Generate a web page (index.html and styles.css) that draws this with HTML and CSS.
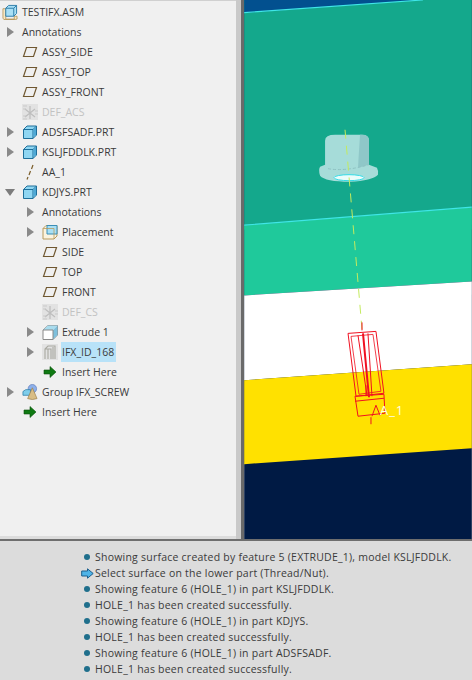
FILE: index.html
```html
<!DOCTYPE html>
<html lang="en">
<head>
    <meta charset="UTF-8">
    <title>TESTIFX.ASM</title>
    <link rel="stylesheet" href="styles.css">
</head>
<body>
    <!-- Shared tree icons -->
    <svg class="defs" width="0" height="0">
        <symbol id="i-part" viewBox="0 0 16 16">
            <path d="M1.5 5.5 L5 2 H14.5 V11 L11 14.5 H1.5 Z" fill="#8fd6f2" stroke="#1f6f9a"/>
            <path d="M1.5 5.5 H11 V14.5 M11 5.5 L14.5 2" fill="none" stroke="#1f6f9a"/>
            <path d="M11.5 5.5 L14 3 V10.5 L11.5 13 Z" fill="#4fa9d6"/>
        </symbol>
        <symbol id="i-asm" viewBox="0 0 17 17">
            <path d="M1 5 H4 V16 H13 V13 H16 V16 L14 16.5 H2 L1 15 Z" fill="#f6e7c4" stroke="#b08d4c" stroke-width=".8"/>
            <path d="M4 4.5 L7 1.5 H15.5 V10 L12.5 13 H4 Z" fill="#a9e0f6" stroke="#2a7ba8"/>
            <path d="M4 4.5 H12.5 V13 M12.5 4.5 L15.5 1.5" fill="none" stroke="#2a7ba8"/>
        </symbol>
        <symbol id="i-plane" viewBox="0 0 16 16">
            <path d="M4.5 3.5 H14.5 L11.5 12.5 H1.5 Z" fill="none" stroke="#6f5730" stroke-width="1.2"/>
        </symbol>
        <symbol id="i-csys" viewBox="0 0 16 16">
            <rect width="16" height="16" fill="#e2e2e2"/>
            <path d="M8 2 V15 M3 13 L13 5 M3 5 L13 13" stroke="#bdbdbd" stroke-width="1.2"/>
            <path d="M1 2 H5 M1 5 H4 M1 12 H4 M1 15 H5 M13 7 H16 M13 10 H16" stroke="#c9c9c9"/>
        </symbol>
        <symbol id="i-axis" viewBox="0 0 16 16">
            <path d="M11 1 L9.5 5 M8.5 7 L7 11 M6 13 L5 15.5" stroke="#7a5c28" stroke-width="1.2"/>
        </symbol>
        <symbol id="i-insert" viewBox="0 0 16 16">
            <path d="M2 6 H8 V2.5 L14 8 L8 13.5 V10 H2 Z" fill="#0f7a12" stroke="#0a4f0c" stroke-width=".6"/>
        </symbol>
        <symbol id="i-extrude" viewBox="0 0 16 16">
            <path d="M1 6 L6 1.5 H15.5 V11 L11 15.5 H1 Z" fill="#fff" stroke="#8a8a8a"/>
            <path d="M1 6 L6 1.5 H15.5 L11 6 Z" fill="#a9dcee"/>
            <path d="M11 6 L15.5 1.5 V11 L11 15.5 Z" fill="#7fc0dc"/>
            <path d="M1 6 H11 V15.5" fill="none" stroke="#8a8a8a"/>
        </symbol>
        <symbol id="i-hole" viewBox="0 0 16 16">
            <rect width="16" height="16" fill="#e2e2e2"/>
            <path d="M3 15 V5 L6 2 H13 V15 M6 15 V5 H9 V15 M11 3 V15 M6 5 L3 5" fill="none" stroke="#a8a8a0" stroke-width="1.1"/>
        </symbol>
        <symbol id="i-group" viewBox="0 0 17 17">
            <circle cx="11" cy="5" r="4.5" fill="#8db0ea" stroke="#5a78b8" stroke-width=".7"/>
            <path d="M1 8 L4 6 H9 V12 H1 Z" fill="#7fcdea" stroke="#2a7ba8" stroke-width=".8"/>
            <path d="M11 4 L16 15.5 Q11 17.5 6 15.5 Z" fill="#d9bd84" stroke="#9a7c44" stroke-width=".7"/>
        </symbol>
        <symbol id="i-place" viewBox="0 0 16 16">
            <path d="M1 4.5 L4 1.5 H15 V12 L12 15 H1 Z" fill="#fbf3df" stroke="#b99a5c"/>
            <path d="M5 1.5 H15 V10 H5 Z" fill="#a9dff4" stroke="#3b8db5"/>
            <path d="M1 4.5 H12 V15" fill="none" stroke="#b99a5c" stroke-width=".8"/>
        </symbol>
    </svg>

    <div class="workspace">
        <div class="tree">
            <div class="row"><svg class="icon"><use href="#i-asm"/></svg><span>TESTIFX.ASM</span></div>
            <div class="row lvl1"><i class="arrow"></i><span>Annotations</span></div>
            <div class="row lvl1"><i class="arrow none"></i><svg class="icon"><use href="#i-plane"/></svg><span>ASSY_SIDE</span></div>
            <div class="row lvl1"><i class="arrow none"></i><svg class="icon"><use href="#i-plane"/></svg><span>ASSY_TOP</span></div>
            <div class="row lvl1"><i class="arrow none"></i><svg class="icon"><use href="#i-plane"/></svg><span>ASSY_FRONT</span></div>
            <div class="row lvl1 off"><i class="arrow none"></i><svg class="icon"><use href="#i-csys"/></svg><span>DEF_ACS</span></div>
            <div class="row lvl1"><i class="arrow"></i><svg class="icon"><use href="#i-part"/></svg><span>ADSFSADF.PRT</span></div>
            <div class="row lvl1"><i class="arrow"></i><svg class="icon"><use href="#i-part"/></svg><span>KSLJFDDLK.PRT</span></div>
            <div class="row lvl1"><i class="arrow none"></i><svg class="icon"><use href="#i-axis"/></svg><span>AA_1</span></div>
            <div class="row lvl1"><i class="arrow open"></i><svg class="icon"><use href="#i-part"/></svg><span>KDJYS.PRT</span></div>
            <div class="row lvl2"><i class="arrow"></i><span>Annotations</span></div>
            <div class="row lvl2"><i class="arrow"></i><svg class="icon"><use href="#i-place"/></svg><span>Placement</span></div>
            <div class="row lvl2"><i class="arrow none"></i><svg class="icon"><use href="#i-plane"/></svg><span>SIDE</span></div>
            <div class="row lvl2"><i class="arrow none"></i><svg class="icon"><use href="#i-plane"/></svg><span>TOP</span></div>
            <div class="row lvl2"><i class="arrow none"></i><svg class="icon"><use href="#i-plane"/></svg><span>FRONT</span></div>
            <div class="row lvl2 off"><i class="arrow none"></i><svg class="icon"><use href="#i-csys"/></svg><span>DEF_CS</span></div>
            <div class="row lvl2"><i class="arrow"></i><svg class="icon"><use href="#i-extrude"/></svg><span>Extrude 1</span></div>
            <div class="row lvl2"><i class="arrow"></i><svg class="icon"><use href="#i-hole"/></svg><span class="selected">IFX_ID_168</span></div>
            <div class="row lvl2"><i class="arrow none"></i><svg class="icon"><use href="#i-insert"/></svg><span>Insert Here</span></div>
            <div class="row lvl1"><i class="arrow"></i><svg class="icon"><use href="#i-group"/></svg><span>Group IFX_SCREW</span></div>
            <div class="row lvl1"><i class="arrow none"></i><svg class="icon"><use href="#i-insert"/></svg><span>Insert Here</span></div>
        </div>
        <div class="sash"></div>

        <!-- 3D view, coordinates are the screen ones -->
        <svg class="view" viewBox="244 0 228 540">
            <rect x="244" y="0" width="228" height="540" fill="#001a44"/>
            <rect x="244" y="0" width="228" height="230" fill="#14a88c"/>
            <polygon points="244,0 423,0 244,13" fill="#02508f"/>
            <polygon points="244,226 472,208 472,282 244,296" fill="#1fc99b"/>
            <polygon points="244,296 472,282 472,365 244,381" fill="#fff"/>
            <polygon points="244,381 472,365 472,449 244,465" fill="#ffe100"/>
            <path d="M244 12.6 L423 0" fill="none" stroke="#3fe6e6" stroke-width="1.2"/>
            <path d="M244 225.6 L472 207.6" fill="none" stroke="#3fe6e6" stroke-width="1.2"/>

            <!-- nut -->
            <path d="M325 141 Q325 135 335 135 H362 Q369 135 369 141 V165 L377 168 Q379 172 378 175 Q372 181 350 182 Q325 182 320 176 Q318 170 320 167 L325 165 Z" fill="#a6dcd9"/>
            <path d="M360 135 H362 Q369 135 369 141 V165 L358 168 Z" fill="#8fc7c8"/>
            <path d="M328 169 Q345 172 369 165" fill="none" stroke="#8fc2c2" stroke-dasharray="3 2"/>
            <ellipse cx="349" cy="178" rx="15" ry="3" fill="#eafcfa" stroke="#32dce8"/>

            <!-- axis -->
            <path d="M345 130 L362 330" fill="none" stroke="#c4ea5e" stroke-dasharray="9 7"/>

            <!-- bolt -->
            <g fill="none" stroke="#f01020">
                <path d="M348 334 L376 332 L384 394 L356 397 Z"/>
                <path d="M351 337 L373 335 L381 392 L359 395 Z" stroke-opacity=".8"/>
                <path d="M355 397 L384 395 L385 414 L358 417 Z"/>
                <path d="M355 402 L384 399"/>
                <path d="M362 323 V331 M371 418 V425 M366 386 V397"/>
                <path d="M372 417 L376 406 L380 416"/>
                <path d="M363 334 L369 398" stroke-width="2"/>
                <path d="M358 336 L367 396 M368 334 L372 397"/>
            </g>
            <text class="dim" x="380" y="416">A_1</text>
        </svg>
    </div>

    <div class="messages">
        <div class="msg"><i class="dot"></i>Showing surface created by feature 5 (EXTRUDE_1), model KSLJFDDLK.</div>
        <div class="msg"><svg class="prompt" viewBox="0 0 13 11"><path d="M.7 3 H6.5 V.8 L12.2 5.5 L6.5 10.2 V8 H.7 Z" fill="#4fb4e8" stroke="#1d5f8c"/></svg>Select surface on the lower part (Thread/Nut).</div>
        <div class="msg"><i class="dot"></i>Showing feature 6 (HOLE_1) in part KSLJFDDLK.</div>
        <div class="msg"><i class="dot"></i>HOLE_1 has been created successfully.</div>
        <div class="msg"><i class="dot"></i>Showing feature 6 (HOLE_1) in part KDJYS.</div>
        <div class="msg"><i class="dot"></i>HOLE_1 has been created successfully.</div>
        <div class="msg"><i class="dot"></i>Showing feature 6 (HOLE_1) in part ADSFSADF.</div>
        <div class="msg"><i class="dot"></i>HOLE_1 has been created successfully.</div>
    </div>
</body>
</html>
```

FILE: styles.css
```css
* {
    margin: 0;
    padding: 0;
    box-sizing: border-box;
}

body {
    width: 472px;
    height: 680px;
    overflow: hidden;
    background: #dcdcdc;
    color: #3a3a3a;
    font-family: "Open Sans", "Noto Sans", sans-serif;
    font-size: 10.5px;
}

.defs {
    position: absolute;
}

.workspace {
    display: flex;
    height: 541px;
    border-bottom: 2px solid #6e6e6e;
}

.tree {
    width: 236px;
    padding-top: 1px;
    background: #f0f0f0;
    border-top: 1px solid #d0d0d0;
    margin-bottom: 3px;
}

.sash {
    width: 8px;
    background: #c9c9c9;
    border-right: 3px solid #6a6a6a;
}

.view {
    display: block;
    width: 228px;
    height: 539px;
}

.row {
    display: flex;
    align-items: center;
    height: 20px;
    padding-left: 2px;
}

.lvl2 {
    padding-left: 22px;
}

.off {
    color: #c2c2c2;
}

.arrow {
    width: 20px;
    height: 20px;
    flex: none;
    position: relative;
}

.arrow::before {
    content: "";
    position: absolute;
    left: 5px;
    top: 5px;
    border-left: 7px solid #8a8a8a;
    border-top: 5px solid transparent;
    border-bottom: 5px solid transparent;
}

.arrow.open::before {
    left: 3px;
    top: 7px;
    border-top: 7px solid #7c7c7c;
    border-left: 5px solid transparent;
    border-right: 5px solid transparent;
    border-bottom: 0;
}

.arrow.none::before {
    display: none;
}

.icon {
    width: 16px;
    height: 16px;
    margin-right: 4px;
    flex: none;
}

.selected {
    background: #b8e2f8;
    line-height: 20px;
    padding: 0 2px 0 1px;
    margin-left: -1px;
}

.dim {
    fill: #fdfde8;
    font-family: "Open Sans", sans-serif;
    font-size: 13px;
    letter-spacing: 1px;
}

.messages {
    padding: 8px 0 0 81px;
}

.msg {
    display: flex;
    align-items: center;
    height: 16px;
    letter-spacing: 0.23px;
    white-space: nowrap;
}

.dot {
    width: 6px;
    height: 6px;
    margin: 0 5px 0 3px;
    border-radius: 50%;
    background: #1f6f8c;
    flex: none;
}

.prompt {
    width: 13px;
    height: 11px;
    margin-right: 1px;
    flex: none;
}
```
